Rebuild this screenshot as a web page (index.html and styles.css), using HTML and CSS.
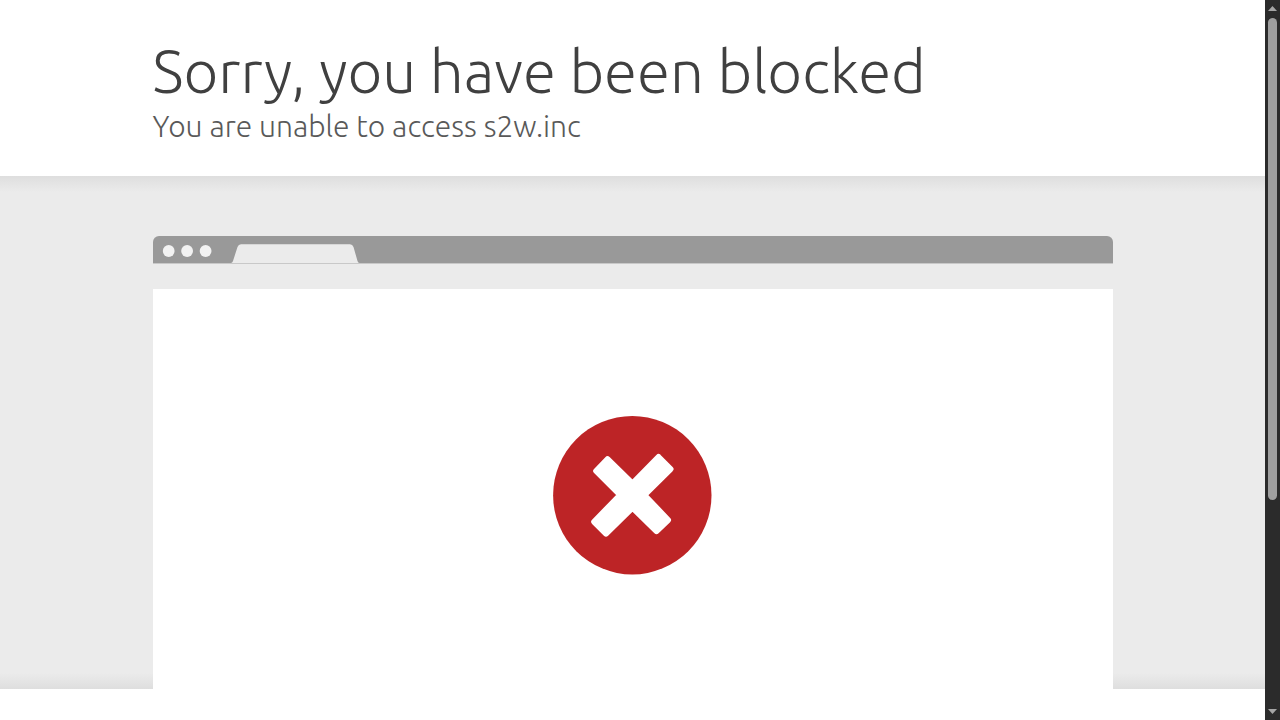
FILE: index.html
```html
<!DOCTYPE html>
<html lang="en">
  <head>
    <meta charset="utf-8">
    <meta name="viewport" content="width=device-width, initial-scale=1.0">
    <title>Sorry, you have been blocked</title>
    <link rel="stylesheet" href="styles.css">
  </head>
  <body>
    <main class="page">
      <header class="wrapper header">
        <h1>Sorry, you have been blocked</h1>
        <h2>You are unable to access s2w.inc</h2>
      </header>

      <section class="section">
        <div class="wrapper">
          <div class="browser-bar">
            <svg width="207" height="27" viewBox="0 0 207 27">
              <g fill="#f2f2f2">
                <circle cx="15.7" cy="15" r="5.9"/>
                <circle cx="34.1" cy="15" r="5.9"/>
                <circle cx="52.6" cy="15" r="5.9"/>
              </g>
              <path d="M78 27 Q79.3 27 80 25 L84.5 11 Q85.5 8.3 88 8.3 H197 Q199.5 8.3 200.5 11 L204.5 25 Q205 27 206.5 27 Z" fill="#ebebeb"/>
            </svg>
          </div>
          <div class="screenshot">
            <svg class="icon-block" width="160" height="160" viewBox="0 0 160 160">
              <circle cx="79.3" cy="79.2" r="79.2" fill="#bd2426"/>
              <path d="M54.5 43.2 L79.5 67.7 L105.5 41 L117.5 53 L91.2 79 L115 104 L103.5 115.2 L79.5 91.5 L53 117.5 L41.2 105.8 L67.2 79 L43.2 55 Z" fill="#fff" stroke="#fff" stroke-width="6" stroke-linejoin="round"/>
            </svg>
          </div>
        </div>
      </section>
    </main>

    <div class="scrollbar">
      <svg width="9" height="5" viewBox="0 0 9 5"><path d="M0 5 L4.5 0 L9 5 Z" fill="#a5a5a5"/></svg>
      <div class="track">
        <div class="thumb"></div>
      </div>
      <svg width="9" height="5" viewBox="0 0 9 5"><path d="M0 0 L4.5 5 L9 0 Z" fill="#a5a5a5"/></svg>
    </div>
  </body>
</html>
```
FILE: styles.css
```css
* {
  box-sizing: border-box;
}

body {
  display: flex;
  height: 100vh;
  margin: 0;
  overflow: hidden;
  background-color: #fff;
  color: #404040;
  font-family: Ubuntu, "Open Sans", "Noto Sans", sans-serif;
}

.page {
  flex: 1;
  min-width: 0;
  overflow: hidden;
}

.wrapper {
  width: 76%;
  max-width: 960px;
  margin: 0 auto;
}

.header {
  padding: 36px 0 30px;
}

h1, h2 {
  margin: 0;
  font-weight: 300;
  white-space: nowrap;
}

h1 {
  font-size: 60px;
  line-height: 70px;
}

h2 {
  color: #595959;
  font-size: 30px;
  line-height: 40px;
}

/* Grey band with a soft shadow at the top and bottom */
.section {
  padding-top: 60px;
  background-color: #ebebeb;
  background-image: linear-gradient(to bottom, #dedede, #ebebeb 16px, #ebebeb calc(100% - 16px), #dedede);
}

/* Browser window */
.browser-bar {
  display: flex;
  height: 28px;
  border-bottom: 1px solid #c8c8c8;
  border-radius: 6px 6px 0 0;
  background-color: #999;
}

.screenshot {
  display: flex;
  align-items: center;
  justify-content: center;
  height: 400px;
  margin-top: 25px;
  padding-top: 14px;
  background-color: #fff;
}

/* Scrollbar */
.scrollbar {
  display: flex;
  flex-direction: column;
  align-items: center;
  gap: 7px;
  width: 15px;
  padding: 6px 0;
  background-color: #2b2b2b;
}

.track {
  flex: 1;
  width: 9px;
}

.thumb {
  height: 70.5%;
  border-radius: 5px;
  background-color: #9f9f9f;
}
```
